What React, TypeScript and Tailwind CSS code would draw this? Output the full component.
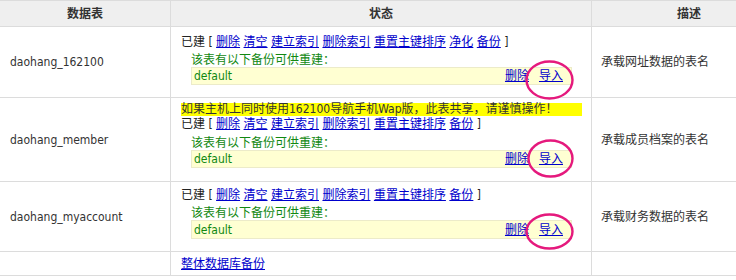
import React from "react";

const FONT = {
  fontFamily:
    '"DejaVu Sans Condensed", "Liberation Sans", "Noto Sans CJK SC", sans-serif',
};

function Ellipse({ left, top, w, h }: { left: number; top: number; w: number; h: number }) {
  return (
    <svg
      className="absolute pointer-events-none overflow-visible z-10"
      style={{ left, top }}
      width={w}
      height={h}
      viewBox={`0 0 ${w} ${h}`}
    >
      <ellipse
        cx={w / 2}
        cy={h / 2}
        rx={w / 2 - 1.5}
        ry={h / 2 - 1.5}
        fill="none"
        stroke="#e5197d"
        strokeWidth={2.4}
      />
    </svg>
  );
}

function L({ children }: { children: React.ReactNode }) {
  return <a className="text-[#0000cc] underline underline-offset-[1px] cursor-pointer">{children}</a>;
}

function BuiltLine({ withClean, cls }: { withClean: boolean; cls: string }) {
  return (
    <div className={`${cls} whitespace-nowrap text-[#222]`}>
      已建 [ <L>删除</L> <L>清空</L> <L>建立索引</L> <L>删除索引</L> <L>重置主键排序</L>{" "}
      {withClean ? (
        <>
          <L>净化</L>{" "}
        </>
      ) : null}
      <L>备份</L> ]
    </div>
  );
}

function BackupBox({ cls, ell }: { cls: string; ell: { left: number; top: number; w: number; h: number } }) {
  return (
    <div
      className={`relative mx-[10px] ${cls} bg-[#ffffd2] border border-[#ecebc9] flex items-center justify-between pl-[2px] pr-[8px]`}
    >
      <span className="text-[#118811] leading-[14px]">default</span>
      <span className="flex gap-[10px] leading-[14px]">
        <L>删除</L>
        <L>导入</L>
      </span>
      <Ellipse {...ell} />
    </div>
  );
}

export default function App() {
  return (
    <div className="w-[736px] h-[280px] overflow-hidden bg-white text-[12px] text-[#333]" style={FONT}>
      <div className="w-[786px] border-t border-[#dcdcdc]">
        {/* header */}
        <div className="grid grid-cols-[171px_421px_194px] h-[26px] bg-[#efefef] border-b border-[#dcdcdc] font-bold text-[#333]">
          <div className="border-r border-[#dcdcdc] flex items-center justify-center">数据表</div>
          <div className="border-r border-[#dcdcdc] flex items-center justify-center">状态</div>
          <div className="flex items-center justify-center">描述</div>
        </div>

        {/* row 1 */}
        <div className="grid grid-cols-[171px_421px_194px] h-[71px] border-b border-[#dcdcdc]">
          <div className="border-r border-[#dcdcdc] flex items-center pl-[10px]">daohang_162100</div>
          <div className="border-r border-[#dcdcdc] pl-[10px] pr-[9px] pt-[6px]">
            <BuiltLine withClean cls="h-[18px] leading-[18px]" />
            <div className="mt-[2px] ml-[10px] h-[14px] leading-[14px] text-[#118811]">该表有以下备份可供重建：</div>
            <BackupBox cls="h-[18px]" ell={{ left: 333, top: -8, w: 49, h: 40 }} />
          </div>
          <div className="flex items-center pl-[9px]">承载网址数据的表名</div>
        </div>

        {/* row 2 */}
        <div className="grid grid-cols-[171px_421px_194px] h-[84px] border-b border-[#dcdcdc]">
          <div className="border-r border-[#dcdcdc] flex items-center pl-[10px]">daohang_member</div>
          <div className="border-r border-[#dcdcdc] pl-[10px] pr-[9px] pt-[5px]">
            <div className="h-[13px] leading-[13px] bg-[#ffff00] text-[#333] whitespace-nowrap">
              如果主机上同时使用162100导航手机Wap版，此表共享，请谨慎操作！
            </div>
            <BuiltLine withClean={false} cls="h-[16px] leading-[16px]" />
            <div className="mt-[4px] ml-[10px] h-[14px] leading-[14px] text-[#118811]">该表有以下备份可供重建：</div>
            <BackupBox cls="h-[18px]" ell={{ left: 335, top: -12, w: 47, h: 39 }} />
          </div>
          <div className="flex items-center pl-[9px]">承载成员档案的表名</div>
        </div>

        {/* row 3 */}
        <div className="grid grid-cols-[171px_421px_194px] h-[70px] border-b border-[#dcdcdc]">
          <div className="border-r border-[#dcdcdc] flex items-center pl-[10px]">daohang_myaccount</div>
          <div className="border-r border-[#dcdcdc] pl-[10px] pr-[9px] pt-[4px]">
            <BuiltLine withClean={false} cls="h-[18px] leading-[18px]" />
            <div className="mt-[2px] ml-[10px] h-[14px] leading-[14px] text-[#118811]">该表有以下备份可供重建：</div>
            <BackupBox cls="h-[19px]" ell={{ left: 333, top: -8, w: 49, h: 37 }} />
          </div>
          <div className="flex items-center pl-[9px]">承载财务数据的表名</div>
        </div>

        {/* row 4 */}
        <div className="grid grid-cols-[171px_421px_194px] h-[24px] border-b border-[#dcdcdc]">
          <div className="border-r border-[#dcdcdc]" />
          <div className="border-r border-[#dcdcdc] flex items-center pl-[10px]">
            <L>整体数据库备份</L>
          </div>
          <div />
        </div>
      </div>
    </div>
  );
}
